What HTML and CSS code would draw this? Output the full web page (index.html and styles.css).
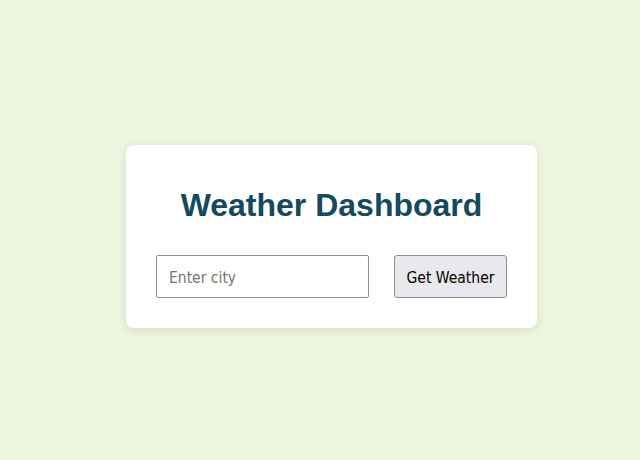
FILE: index.html
```html
<!DOCTYPE html>
<html lang="en">
<head>
<meta charset="utf-8">
<title>Weather Dashboard</title>
<link rel="stylesheet" href="styles.css">
</head>
<body>
  <div class="card">
    <h1 class="title">Weather Dashboard</h1>
    <div class="controls">
      <input class="city" type="text" placeholder="Enter city">
      <button class="go" type="button">Get Weather</button>
    </div>
  </div>
</body>
</html>
```

FILE: styles.css
```css
html, body {
  margin: 0;
  padding: 0;
}
body {
  background: #eef5de;
  min-height: 460px;
  box-sizing: border-box;
  padding: 12px 0 0 23px;
  display: flex;
  align-items: center;
  justify-content: center;
  font-family: "Liberation Sans", Arial, sans-serif;
}
.card {
  background: #ffffff;
  border-radius: 8px;
  box-shadow: 0 2px 10px rgba(0, 0, 0, 0.1);
  padding: 30px;
  width: 351px;
}
.title {
  margin: 12px 0 31px;
  font-size: 32px;
  line-height: 37px;
  font-weight: bold;
  text-align: center;
  color: #134a5e;
}
.controls {
  display: flex;
  gap: 25px;
}
.city {
  box-sizing: border-box;
  width: 213px;
  height: 43px;
  padding: 3px 12px 0;
  border: 1px solid #8f8f9d;
  border-radius: 2px;
  font-family: "DejaVu Sans Condensed", "DejaVu Sans", Tahoma, sans-serif;
  font-stretch: condensed;
  font-size: 15.5px;
  color: #000;
  outline: none;
}
.city::placeholder {
  color: #757575;
}
.go {
  box-sizing: border-box;
  width: 113px;
  height: 43px;
  padding: 3px 0 0;
  border: 1px solid #8f8f9d;
  border-radius: 3px;
  background: #e9e8ed;
  font-family: "DejaVu Sans Condensed", "DejaVu Sans", Tahoma, sans-serif;
  font-stretch: condensed;
  font-size: 15.5px;
  color: #000;
}
```
